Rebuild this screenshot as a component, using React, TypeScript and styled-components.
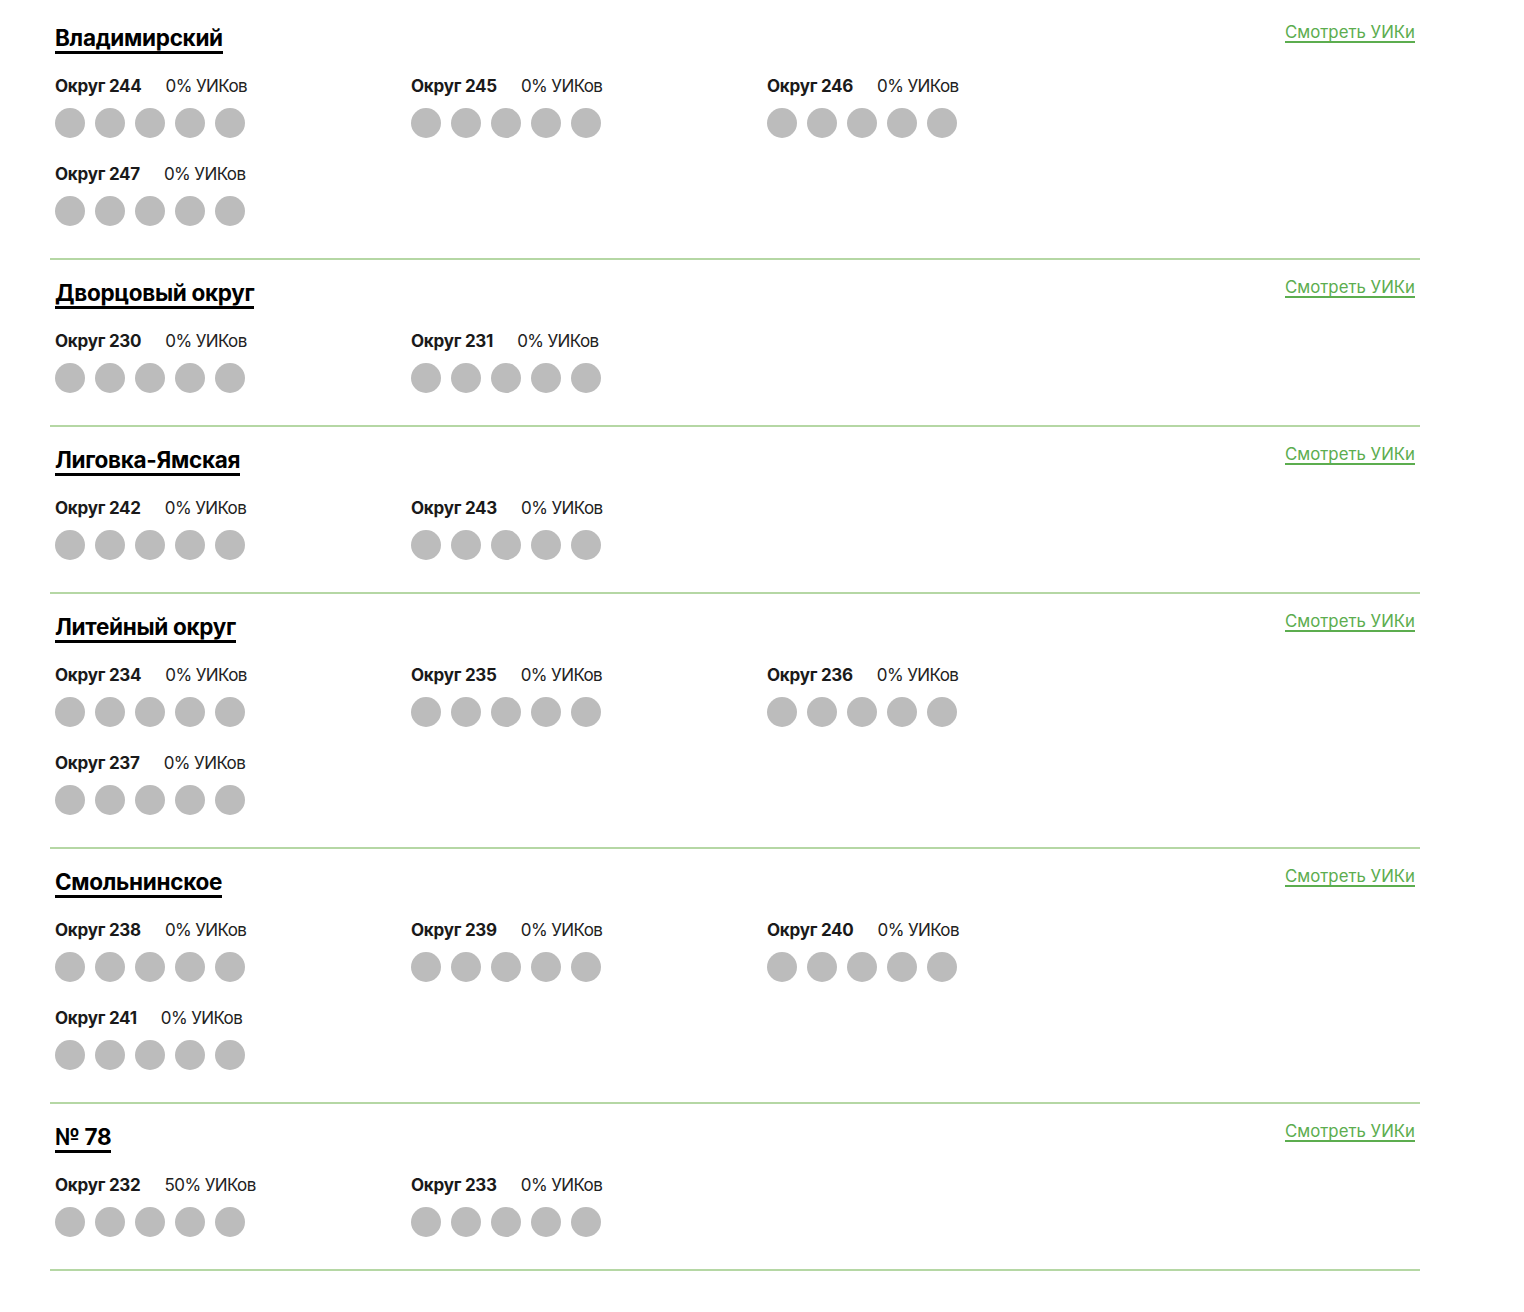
import React from "react";
import styled, { createGlobalStyle } from "styled-components";

const Global = createGlobalStyle`
  html, body { margin: 0; padding: 0; background: #fff; }
  body { font-family: Inter, "Noto Sans", "Liberation Sans", sans-serif; color: #1c1c1c; }
`;

const Page = styled.div`
  width: 1370px;
  margin-left: 50px;
  padding-top: 5px;
`;

const Section = styled.section`
  padding: 19px 5px 32px;
  border-bottom: 2px solid #b5d7a4;
`;

const Header = styled.div`
  display: flex;
  justify-content: space-between;
  align-items: flex-start;
`;

const Title = styled.h2`
  display: inline-block;
  margin: 0;
  font-size: 22.5px;
  line-height: 27px;
  font-weight: 700;
  color: #000;
  letter-spacing: -0.3px;
  border-bottom: 3px solid #000;
`;

const Link = styled.a`
  display: inline-block;
  font-size: 16.8px;
  line-height: 17px;
  color: #5cad4f;
  text-decoration: none;
  border-bottom: 2px solid #5cad4f;
  cursor: pointer;
`;

const Grid = styled.div`
  display: grid;
  grid-template-columns: repeat(3, 356px);
  row-gap: 26px;
  margin-top: 22px;
`;

const Card = styled.div`
  display: flex;
  flex-direction: column;
  gap: 12px;
`;

const LabelRow = styled.div`
  display: flex;
  gap: 24px;
  font-size: 17px;
  line-height: 20px;
`;

const Name = styled.span`
  font-weight: 700;
  color: #1a1a1a;
  letter-spacing: -0.25px;
`;

const Percent = styled.span`
  font-weight: 400;
  color: #222;
  letter-spacing: -0.6px;
`;

const Dots = styled.div`
  display: flex;
  gap: 10px;
`;

const Dot = styled.span<{ $filled?: boolean }>`
  width: 30px;
  height: 30px;
  border-radius: 50%;
  background: ${(p) => (p.$filled ? "#5cad4f" : "#bcbcbc")};
`;

type District = { title: string; okrugs: { n: number; p: number }[] };

const data: District[] = [
  { title: "Владимирский", okrugs: [244, 245, 246, 247].map((n) => ({ n, p: 0 })) },
  { title: "Дворцовый округ", okrugs: [230, 231].map((n) => ({ n, p: 0 })) },
  { title: "Лиговка-Ямская", okrugs: [242, 243].map((n) => ({ n, p: 0 })) },
  { title: "Литейный округ", okrugs: [234, 235, 236, 237].map((n) => ({ n, p: 0 })) },
  { title: "Смольнинское", okrugs: [238, 239, 240, 241].map((n) => ({ n, p: 0 })) },
  { title: "№ 78", okrugs: [{ n: 232, p: 50 }, { n: 233, p: 0 }] },
];

export default function App() {
  return (
    <>
      <Global />
      <Page>
        {data.map((d) => (
          <Section key={d.title}>
            <Header>
              <Title>{d.title}</Title>
              <Link>Смотреть УИКи</Link>
            </Header>
            <Grid>
              {d.okrugs.map((o) => (
                <Card key={o.n}>
                  <LabelRow>
                    <Name>Округ {o.n}</Name>
                    <Percent>{o.p}% УИКов</Percent>
                  </LabelRow>
                  <Dots>
                    {[0, 1, 2, 3, 4].map((i) => (
                      <Dot key={i} />
                    ))}
                  </Dots>
                </Card>
              ))}
            </Grid>
          </Section>
        ))}
      </Page>
    </>
  );
}
